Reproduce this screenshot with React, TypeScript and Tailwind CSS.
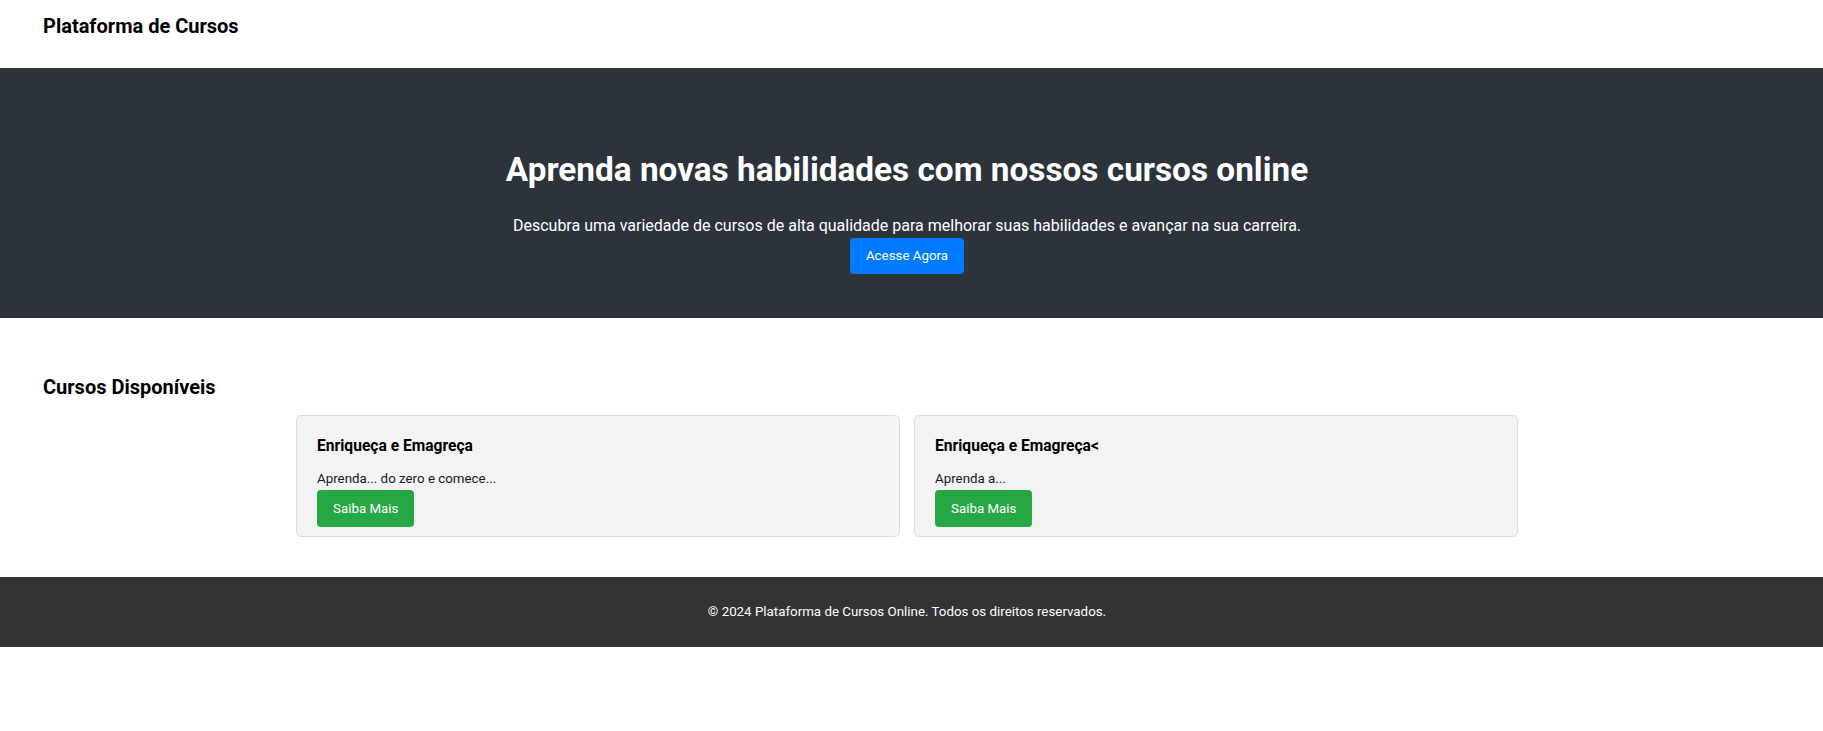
import React from "react";

const courses = [
  { title: "Enriqueça e Emagreça", desc: "Aprenda... do zero e comece..." },
  { title: "Enriqueça e Emagreça<", desc: "Aprenda a..." },
];

export default function App() {
  return (
    <div className="min-h-[731px] bg-white text-black" style={{ fontFamily: "Roboto, 'Liberation Sans', sans-serif" }}>
      <header className="px-[43px] pt-[15px] pb-[30px]">
        <h1 className="text-[20px] leading-[23px] font-bold">Plataforma de Cursos</h1>
      </header>

      <section className="bg-[#2d333b] text-white flex flex-col items-center pt-[82px] pb-[44px] pr-[9px]">
        <h2 className="text-[33.33px] leading-[39px] font-bold">Aprenda novas habilidades com nossos cursos online</h2>
        <p className="mt-[27px] text-[16px] leading-[19px]">
          Descubra uma variedade de cursos de alta qualidade para melhorar suas habilidades e avançar na sua carreira.
        </p>
        <button className="mt-[3px] h-[36px] px-[16px] rounded-[4px] bg-[#007bff] text-white text-[13.33px] leading-[16px]">
          Acesse Agora
        </button>
      </section>

      <section className="pt-[58px] pb-[40px]">
        <h2 className="px-[43px] text-[20px] leading-[23px] font-bold">Cursos Disponíveis</h2>
        <div className="mt-[16px] flex justify-center gap-[14px] pr-[9px]">
          {courses.map((c, i) => (
            <div
              key={i}
              className="w-[604px] border border-[#dddddd] rounded-[5px] bg-[#f3f3f3] px-[20px] pt-[21px] pb-[9px]"
            >
              <h3 className="text-[15.6px] leading-[18px] font-bold">{c.title}</h3>
              <p className="mt-[16px] text-[13.33px] leading-[16px] text-[#1a1a1a]">{c.desc}</p>
              <button className="mt-[3px] h-[37px] px-[16px] rounded-[4px] bg-[#28a745] text-white text-[13.33px] leading-[16px]">
                Saiba Mais
              </button>
            </div>
          ))}
        </div>
      </section>

      <footer className="bg-[#333333] text-white text-center py-[27px] pr-[9px] text-[13.33px] leading-[16px]">
        © 2024 Plataforma de Cursos Online. Todos os direitos reservados.
      </footer>
    </div>
  );
}
